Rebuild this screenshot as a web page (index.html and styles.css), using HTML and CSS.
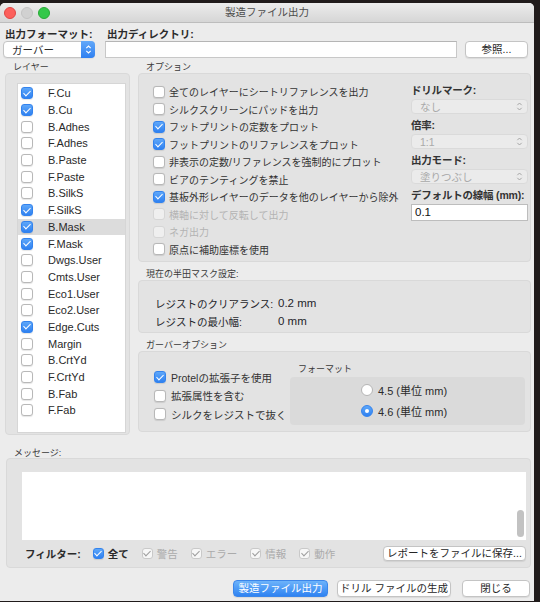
FILE: index.html
```html
<!DOCTYPE html>
<html lang="ja">
<head>
  <meta charset="UTF-8">
  <title>製造ファイル出力</title>
  <link rel="stylesheet" href="styles.css">
</head>
<body>
<div class="window">
  <div class="titlebar">
    <div class="lights">
      <span class="light red"></span>
      <span class="light gray"></span>
      <span class="light green"></span>
    </div>
    製造ファイル出力
  </div>

  <div class="content">
    <!-- 出力フォーマット / ディレクトリ -->
    <div class="top-row">
      <div class="fmt">
        <div class="label">出力フォーマット:</div>
        <div class="select">
          <span class="select-text">ガーバー</span>
          <span class="stepper"><svg viewBox="0 0 8 12"><path d="M1.5 4.5L4 2l2.5 2.5M1.5 7.5L4 10l2.5-2.5"/></svg></span>
        </div>
      </div>
      <div class="dir">
        <div class="label">出力ディレクトリ:</div>
        <div class="textbox"></div>
      </div>
      <div class="btn browse">参照...</div>
    </div>

    <div class="main">
      <!-- レイヤー -->
      <div class="group layers">
        <div class="group-label">レイヤー</div>
        <div class="panel">
          <div class="layer-list">
            <div class="layer"><span class="cb on"></span>F.Cu</div>
            <div class="layer"><span class="cb on"></span>B.Cu</div>
            <div class="layer"><span class="cb"></span>B.Adhes</div>
            <div class="layer"><span class="cb"></span>F.Adhes</div>
            <div class="layer"><span class="cb"></span>B.Paste</div>
            <div class="layer"><span class="cb"></span>F.Paste</div>
            <div class="layer"><span class="cb"></span>B.SilkS</div>
            <div class="layer"><span class="cb on"></span>F.SilkS</div>
            <div class="layer selected"><span class="cb on"></span>B.Mask</div>
            <div class="layer"><span class="cb on"></span>F.Mask</div>
            <div class="layer"><span class="cb"></span>Dwgs.User</div>
            <div class="layer"><span class="cb"></span>Cmts.User</div>
            <div class="layer"><span class="cb"></span>Eco1.User</div>
            <div class="layer"><span class="cb"></span>Eco2.User</div>
            <div class="layer"><span class="cb on"></span>Edge.Cuts</div>
            <div class="layer"><span class="cb"></span>Margin</div>
            <div class="layer"><span class="cb"></span>B.CrtYd</div>
            <div class="layer"><span class="cb"></span>F.CrtYd</div>
            <div class="layer"><span class="cb"></span>B.Fab</div>
            <div class="layer"><span class="cb"></span>F.Fab</div>
          </div>
        </div>
      </div>

      <div class="right">
        <!-- オプション -->
        <div class="group">
          <div class="group-label">オプション</div>
          <div class="panel options">
            <div class="checks">
              <div class="check"><span class="cb"></span>全てのレイヤーにシートリファレンスを出力</div>
              <div class="check"><span class="cb"></span>シルクスクリーンにパッドを出力</div>
              <div class="check"><span class="cb on"></span>フットプリントの定数をプロット</div>
              <div class="check"><span class="cb on"></span>フットプリントのリファレンスをプロット</div>
              <div class="check"><span class="cb"></span>非表示の定数/リファレンスを強制的にプロット</div>
              <div class="check"><span class="cb"></span>ビアのテンティングを禁止</div>
              <div class="check"><span class="cb on"></span>基板外形レイヤーのデータを他のレイヤーから除外</div>
              <div class="check disabled"><span class="cb"></span>横軸に対して反転して出力</div>
              <div class="check disabled"><span class="cb"></span>ネガ出力</div>
              <div class="check"><span class="cb"></span>原点に補助座標を使用</div>
            </div>
            <div class="side">
              <div class="side-label">ドリルマーク:</div>
              <div class="select dis">
                <span class="select-text">なし</span>
                <svg viewBox="0 0 8 12"><path d="M1.5 4.5L4 2l2.5 2.5M1.5 7.5L4 10l2.5-2.5"/></svg>
              </div>
              <div class="side-label">倍率:</div>
              <div class="select dis">
                <span class="select-text">1:1</span>
                <svg viewBox="0 0 8 12"><path d="M1.5 4.5L4 2l2.5 2.5M1.5 7.5L4 10l2.5-2.5"/></svg>
              </div>
              <div class="side-label">出力モード:</div>
              <div class="select dis">
                <span class="select-text">塗りつぶし</span>
                <svg viewBox="0 0 8 12"><path d="M1.5 4.5L4 2l2.5 2.5M1.5 7.5L4 10l2.5-2.5"/></svg>
              </div>
              <div class="side-label">デフォルトの線幅 (mm):</div>
              <div class="textbox val">0.1</div>
            </div>
          </div>
        </div>

        <!-- 半田マスク -->
        <div class="group">
          <div class="group-label">現在の半田マスク設定:</div>
          <div class="panel mask">
            <span>レジストのクリアランス:</span><span class="num">0.2 mm</span>
            <span>レジストの最小幅:</span><span class="num">0 mm</span>
          </div>
        </div>

        <!-- ガーバーオプション -->
        <div class="group">
          <div class="group-label">ガーバーオプション</div>
          <div class="panel gerber">
            <div class="gchecks">
              <div class="check"><span class="cb on"></span>Protelの拡張子を使用</div>
              <div class="check"><span class="cb"></span>拡張属性を含む</div>
              <div class="check"><span class="cb"></span>シルクをレジストで抜く</div>
            </div>
            <div class="format">
              <div class="group-label">フォーマット</div>
              <div class="subpanel">
                <div class="radio-row"><span class="rb"></span>4.5 (単位 mm)</div>
                <div class="radio-row"><span class="rb on"></span>4.6 (単位 mm)</div>
              </div>
            </div>
          </div>
        </div>
      </div>
    </div>

    <!-- メッセージ -->
    <div class="group messages">
      <div class="group-label">メッセージ:</div>
      <div class="panel">
        <div class="log"><span class="thumb"></span></div>
        <div class="filters">
          <span class="filter-label">フィルター:</span>
          <span class="fcheck all"><span class="cb on"></span>全て</span>
          <span class="fcheck off"><span class="cb on"></span>警告</span>
          <span class="fcheck off"><span class="cb on"></span>エラー</span>
          <span class="fcheck off"><span class="cb on"></span>情報</span>
          <span class="fcheck off"><span class="cb on"></span>動作</span>
          <div class="btn report">レポートをファイルに保存...</div>
        </div>
      </div>
    </div>

    <div class="footer">
      <div class="btn primary">製造ファイル出力</div>
      <div class="btn drill">ドリル ファイルの生成</div>
      <div class="btn close">閉じる</div>
    </div>
  </div>
</div>
</body>
</html>
```

FILE: styles.css
```css
* {
  box-sizing: border-box;
}
body {
  margin: 0;
  background: #201b1b;
  font-family: "Liberation Sans", "Noto Sans CJK JP", sans-serif;
  font-size: 10.5px;
  color: #2b2b2b;
}
.window {
  width: 534px;
  height: 598px;
  margin-top: 3px;
  background: #ececec;
  border-radius: 5px 5px 0 0;
  overflow: hidden;
}
.titlebar {
  position: relative;
  height: 20px;
  background: linear-gradient(#ececec, #d6d6d6);
  border-bottom: 1px solid #bdbdbd;
  text-align: center;
  line-height: 19px;
  color: #4d4d4d;
}
.lights {
  position: absolute;
  left: 4px;
  top: 4px;
  display: flex;
  gap: 5px;
}
.light {
  width: 12px;
  height: 12px;
  border-radius: 50%;
}
.light.red {
  background: #fc605c;
  border: 1px solid #df4744;
}
.light.gray {
  background: #d1d1d1;
  border: 1px solid #c3c3c3;
}
.light.green {
  background: #34c84a;
  border: 1px solid #27aa35;
}

.content {
  padding: 0 3px;
}

/* top row */
.top-row {
  display: flex;
  align-items: flex-end;
  padding-top: 5px;
}
.label {
  font-weight: bold;
  line-height: 12px;
  margin: 0 0 1px 2px;
}
.fmt {
  width: 92px;
}
.dir {
  width: 352px;
  margin-left: 10px;
}
.browse {
  width: 63px;
  margin-left: 8px;
}
.select {
  display: flex;
  align-items: center;
  height: 17px;
  background: #fff;
  border: 1px solid #c4c4c4;
  border-radius: 4px;
  box-shadow: 0 1px 1px rgba(0, 0, 0, 0.06);
  padding-left: 8px;
}
.select-text {
  flex: 1;
}
.stepper {
  align-self: stretch;
  width: 14px;
  margin: -1px -1px -1px 0;
  background: linear-gradient(#62a8f9, #2f80f1);
  border-radius: 0 4px 4px 0;
  display: flex;
  align-items: center;
  justify-content: center;
}
.stepper svg,
.select.dis svg {
  width: 7px;
  height: 11px;
  fill: none;
  stroke: #fff;
  stroke-width: 1.3;
}
.textbox {
  height: 17px;
  background: #fff;
  border: 1px solid #c8c8c8;
  border-top-color: #b5b5b5;
}
.btn {
  height: 17px;
  background: #fff;
  border: 1px solid #c4c4c4;
  border-radius: 4px;
  box-shadow: 0 1px 1px rgba(0, 0, 0, 0.08);
  text-align: center;
  line-height: 15px;
  color: #262626;
  white-space: nowrap;
}

/* groups */
.main {
  display: grid;
  grid-template-columns: 125px 393px;
  column-gap: 8px;
  margin: 4px 0 0 2px;
  align-items: start;
}
.group-label {
  font-size: 9px;
  line-height: 11px;
  color: #3a3a3a;
  padding-left: 8px;
}
.panel {
  background: #e3e3e3;
  border: 1px solid #d9d9d9;
  border-radius: 4px;
}

/* checkboxes */
.cb {
  display: inline-flex;
  align-items: center;
  justify-content: center;
  flex: none;
  width: 12px;
  height: 12px;
  background: #fff;
  border: 1px solid #b8b8b8;
  border-radius: 3px;
  box-shadow: 0 0.5px 1px rgba(0, 0, 0, 0.1);
}
.cb.on {
  background: linear-gradient(#5ea7f9, #2f81f1);
  border-color: #3383ee;
}
.cb.on::after {
  content: "";
  width: 3px;
  height: 6px;
  margin-top: -2px;
  border: solid #fff;
  border-width: 0 1.5px 1.5px 0;
  transform: rotate(45deg);
}

/* layers */
.layers .panel {
  height: 362px;
  padding: 9px 3px 1px 11px;
}
.layer-list {
  height: 350px;
  background: #fff;
  border: 1px solid #d6d6d6;
  padding-top: 1px;
}
.layer {
  display: flex;
  align-items: center;
  gap: 15px;
  height: 16.7px;
  padding-left: 3px;
  font-size: 11px;
  color: #2a2a2a;
}
.layer.selected {
  background: #dcdcdc;
}

/* options */
.right .group + .group {
  margin-top: 7px;
}
.options {
  display: grid;
  grid-template-columns: 1fr 117px;
  height: 189px;
  padding: 9px 2px 0 14px;
}
.check {
  display: flex;
  align-items: center;
  gap: 4px;
  height: 17.5px;
  font-size: 10px;
  color: #333;
  white-space: nowrap;
}
.check.disabled {
  color: #b3b3b3;
}
.check.disabled .cb {
  background: #efefef;
  border-color: #d6d6d6;
  box-shadow: none;
}
.side {
  padding-top: 1px;
}
.side-label {
  font-weight: bold;
  line-height: 13px;
  color: #333;
  white-space: nowrap;
  letter-spacing: -0.2px;
}
.select.dis {
  height: 15px;
  margin: 2px 0 5px;
  background: #ebebeb;
  border-color: #dadada;
  box-shadow: none;
  color: #a9a9a9;
  padding-right: 4px;
}
.select.dis svg {
  stroke: #9a9a9a;
  stroke-width: 1;
}
.textbox.val {
  margin-top: 2px;
  padding-left: 3px;
  line-height: 15px;
  font-size: 11.5px;
  color: #111;
  border-color: #bdbdbd;
}

/* solder mask */
.mask {
  display: grid;
  grid-template-columns: 123px auto;
  grid-auto-rows: 18px;
  align-items: center;
  height: 53px;
  padding: 13px 0 0 16px;
  color: #1f1f2a;
}
.num {
  font-size: 11.5px;
}

/* gerber */
.gerber {
  display: grid;
  grid-template-columns: 136px 1fr;
  height: 81px;
  padding: 12px 5px 0 15px;
}
.gchecks {
  padding-top: 4px;
}
.gchecks .check {
  height: 18.5px;
  font-size: 10.5px;
  gap: 5px;
}
.subpanel {
  height: 48px;
  margin-top: 2px;
  background: #dadada;
  border-radius: 4px;
  padding: 2.5px 0 0 71px;
}
.radio-row {
  display: flex;
  align-items: center;
  gap: 5px;
  height: 21px;
  font-size: 11px;
}
.rb {
  width: 12px;
  height: 12px;
  border-radius: 50%;
  background: #fff;
  border: 1px solid #b5b5b5;
  display: inline-flex;
  align-items: center;
  justify-content: center;
}
.rb.on {
  background: linear-gradient(#5ea7f9, #2f81f1);
  border-color: #3383ee;
}
.rb.on::after {
  content: "";
  width: 4px;
  height: 4px;
  border-radius: 50%;
  background: #fff;
}

/* messages */
.messages {
  margin: 13px 0 0 3px;
}
.messages .group-label {
  line-height: 10px;
}
.messages .panel {
  height: 110px;
  padding: 13px 4px 1px 15px;
}
.log {
  position: relative;
  height: 68px;
  background: #fff;
}
.thumb {
  position: absolute;
  right: 2px;
  bottom: 3px;
  width: 7px;
  height: 27px;
  border-radius: 4px;
  background: #c2c2c2;
}
.filters {
  display: flex;
  align-items: center;
  height: 26px;
  padding-left: 3px;
}
.filter-label {
  font-weight: bold;
  margin-right: 12px;
}
.fcheck {
  display: flex;
  align-items: center;
  gap: 4px;
  margin-right: 13px;
}
.fcheck .cb {
  width: 11px;
  height: 11px;
}
.fcheck.all {
  font-weight: bold;
}
.fcheck.off {
  color: #ababab;
}
.fcheck.off .cb {
  background: #f7f7f7;
  border-color: #c9c9c9;
  box-shadow: none;
}
.fcheck.off .cb::after {
  border-color: #9d9d9d;
  border-width: 0 1px 1px 0;
}
.report {
  margin-left: auto;
  width: 143px;
  height: 15px;
  line-height: 13px;
}

/* footer */
.footer {
  display: flex;
  justify-content: flex-end;
  margin: 12px 1px 0 0;
}
.primary {
  width: 95px;
  background: linear-gradient(#6db3fa, #2f83f2);
  border-color: #3b86ea;
  color: #fff;
}
.drill {
  width: 114px;
  margin-left: 9px;
}
.close {
  width: 68px;
  margin-left: 11px;
}
```
